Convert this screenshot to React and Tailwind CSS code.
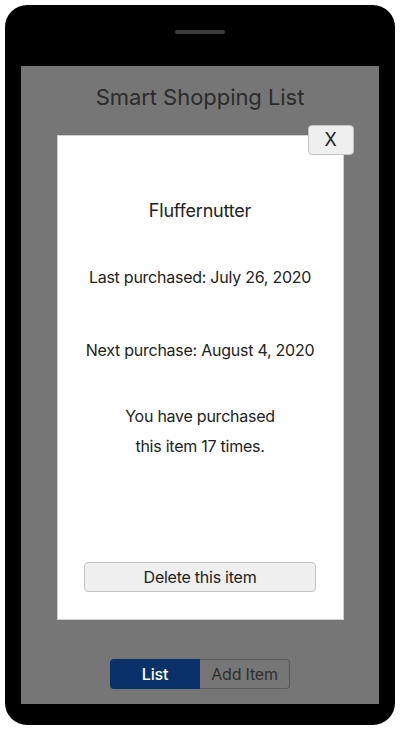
export default function App() {
  const font = { fontFamily: 'Inter, "Noto Sans", sans-serif' };
  return (
    <div className="w-[400px] h-[730px] bg-white" style={font}>
      <div className="ml-[5px] mt-[5px] w-[390px] h-[720px] bg-black rounded-[22px] flex flex-col items-center">
        <div className="mt-[25px] w-[50px] h-[4px] rounded-full bg-[#3c3c3c]" />
        <div className="mt-[32px] w-[358px] h-[638px] bg-[#767676] flex flex-col items-center">
          <h1 className="mt-[17px] text-[22px] leading-[28px] text-[#2b2b2b] font-normal tracking-[-0.05px]">
            Smart Shopping List
          </h1>
          <div className="relative mt-[24px] w-[287px] h-[485px] bg-white border border-[#d0d0d0] flex flex-col items-center text-[#222] tracking-[-0.25px]">
            <button className="absolute right-[-11px] top-[-11px] w-[46px] h-[30px] rounded-[4px] bg-[#efefef] border border-[#c4c4c4] text-[18px] leading-none text-[#222] flex items-center justify-center">
              X
            </button>
            <p className="mt-[63px] text-[18px] leading-[24px] tracking-[-0.2px]">Fluffernutter</p>
            <p className="mt-[42px] text-[16px] leading-[24px]">Last purchased: July 26, 2020</p>
            <p className="mt-[49px] text-[16px] leading-[24px]">Next purchase: August 4, 2020</p>
            <p className="mt-[39px] text-[16px] leading-[30px] text-center">
              You have purchased
              <br />
              this item 17 times.
            </p>
            <button className="mt-auto mb-[27px] w-[232px] h-[30px] rounded-[4px] bg-[#efefef] border border-[#c4c4c4] text-[16px] text-[#222] flex items-center justify-center">
              Delete this item
            </button>
          </div>
          <div className="mt-[39px] flex tracking-[-0.2px]">
            <button className="w-[90px] h-[30px] rounded-l-[4px] bg-[#0a316a] text-white text-[16px] font-medium flex items-center justify-center">
              List
            </button>
            <button className="w-[90px] h-[30px] rounded-r-[4px] border border-l-0 border-[#5a5a5a] text-[#2e2e2e] text-[16px] flex items-center justify-center">
              Add Item
            </button>
          </div>
        </div>
      </div>
    </div>
  );
}
